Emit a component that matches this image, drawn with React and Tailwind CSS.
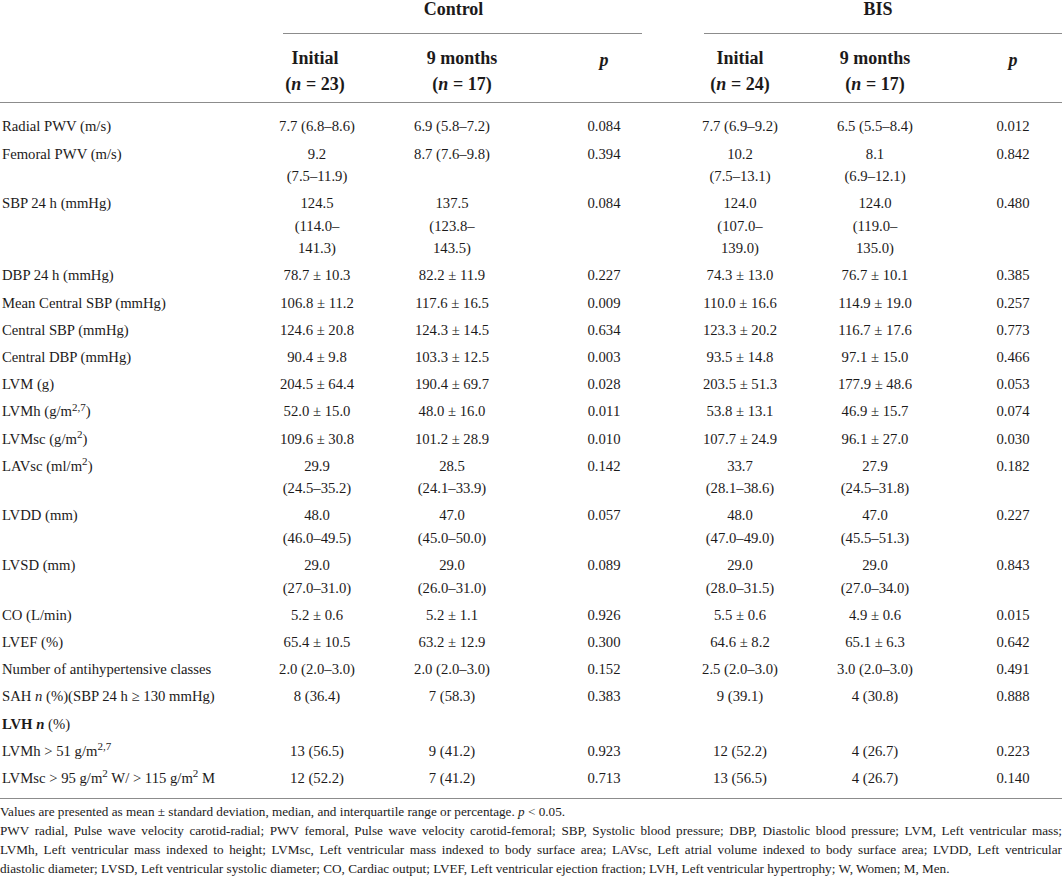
import React from 'react';

const cols = 'grid grid-cols-[250px_134px_136px_168px_104px_172px_98px]';

// values: control initial, control 9 months, p, BIS initial, BIS 9 months, p
const rows = [
    { label: 'Radial PWV (m/s)', v: ['7.7 (6.8–8.6)', '6.9 (5.8–7.2)', '0.084', '7.7 (6.9–9.2)', '6.5 (5.5–8.4)', '0.012'] },
    { label: 'Femoral PWV (m/s)', v: ['9.2\n(7.5–11.9)', '8.7 (7.6–9.8)', '0.394', '10.2\n(7.5–13.1)', '8.1\n(6.9–12.1)', '0.842'] },
    { label: 'SBP 24 h (mmHg)', v: ['124.5\n(114.0–\n141.3)', '137.5\n(123.8–\n143.5)', '0.084', '124.0\n(107.0–\n139.0)', '124.0\n(119.0–\n135.0)', '0.480'] },
    { label: 'DBP 24 h (mmHg)', v: ['78.7 ± 10.3', '82.2 ± 11.9', '0.227', '74.3 ± 13.0', '76.7 ± 10.1', '0.385'] },
    { label: 'Mean Central SBP (mmHg)', v: ['106.8 ± 11.2', '117.6 ± 16.5', '0.009', '110.0 ± 16.6', '114.9 ± 19.0', '0.257'] },
    { label: 'Central SBP (mmHg)', v: ['124.6 ± 20.8', '124.3 ± 14.5', '0.634', '123.3 ± 20.2', '116.7 ± 17.6', '0.773'] },
    { label: 'Central DBP (mmHg)', v: ['90.4 ± 9.8', '103.3 ± 12.5', '0.003', '93.5 ± 14.8', '97.1 ± 15.0', '0.466'] },
    { label: 'LVM (g)', v: ['204.5 ± 64.4', '190.4 ± 69.7', '0.028', '203.5 ± 51.3', '177.9 ± 48.6', '0.053'] },
    { label: <>LVMh (g/m<sup>2,7</sup>)</>, v: ['52.0 ± 15.0', '48.0 ± 16.0', '0.011', '53.8 ± 13.1', '46.9 ± 15.7', '0.074'] },
    { label: <>LVMsc (g/m<sup>2</sup>)</>, v: ['109.6 ± 30.8', '101.2 ± 28.9', '0.010', '107.7 ± 24.9', '96.1 ± 27.0', '0.030'] },
    { label: <>LAVsc (ml/m<sup>2</sup>)</>, v: ['29.9\n(24.5–35.2)', '28.5\n(24.1–33.9)', '0.142', '33.7\n(28.1–38.6)', '27.9\n(24.5–31.8)', '0.182'] },
    { label: 'LVDD (mm)', v: ['48.0\n(46.0–49.5)', '47.0\n(45.0–50.0)', '0.057', '48.0\n(47.0–49.0)', '47.0\n(45.5–51.3)', '0.227'] },
    { label: 'LVSD (mm)', v: ['29.0\n(27.0–31.0)', '29.0\n(26.0–31.0)', '0.089', '29.0\n(28.0–31.5)', '29.0\n(27.0–34.0)', '0.843'] },
    { label: 'CO (L/min)', v: ['5.2 ± 0.6', '5.2 ± 1.1', '0.926', '5.5 ± 0.6', '4.9 ± 0.6', '0.015'] },
    { label: 'LVEF (%)', v: ['65.4 ± 10.5', '63.2 ± 12.9', '0.300', '64.6 ± 8.2', '65.1 ± 6.3', '0.642'] },
    { label: 'Number of antihypertensive classes', v: ['2.0 (2.0–3.0)', '2.0 (2.0–3.0)', '0.152', '2.5 (2.0–3.0)', '3.0 (2.0–3.0)', '0.491'] },
    { label: <>SAH <i>n</i> (%)(SBP 24 h ≥ 130 mmHg)</>, v: ['8 (36.4)', '7 (58.3)', '0.383', '9 (39.1)', '4 (30.8)', '0.888'] },
    { label: <><b>LVH <i>n</i></b> (%)</>, v: ['', '', '', '', '', ''] },
    { label: <>LVMh &gt; 51 g/m<sup>2,7</sup></>, v: ['13 (56.5)', '9 (41.2)', '0.923', '12 (52.2)', '4 (26.7)', '0.223'] },
    { label: <>LVMsc &gt; 95 g/m<sup>2</sup> W/ &gt; 115 g/m<sup>2</sup> M</>, v: ['12 (52.2)', '7 (41.2)', '0.713', '13 (56.5)', '4 (26.7)', '0.140'] },
];

const App = () => {
    return (
        <div className="w-[1062px] h-[883px] bg-white text-[#1c1a1a] font-['Liberation_Serif',serif] overflow-hidden">
            {/* group headers */}
            <div className="flex h-[34px] text-[18px] font-bold leading-[18px]">
                <div className="w-[283px]" />
                <div className="w-[359px] border-b border-[#8c8c8c] text-center pr-[18px]">Control</div>
                <div className="w-[62px]" />
                <div className="flex-1 border-b border-[#8c8c8c] text-center pr-[10px]">BIS</div>
            </div>

            {/* column headers */}
            <div className={`${cols} h-[69px] border-b border-[#8c8c8c] text-[18px] font-bold leading-[26px] pt-[11px]`}>
                <div />
                <div className="text-center pr-[4px]">Initial<br />(<i>n</i> = 23)</div>
                <div className="text-center pl-[20px]">9 months<br />(<i>n</i> = 17)</div>
                <div className="text-center pt-[2px]"><i>p</i></div>
                <div className="text-center">Initial<br />(<i>n</i> = 24)</div>
                <div className="text-center pr-[6px]">9 months<br />(<i>n</i> = 17)</div>
                <div className="text-center pt-[2px]"><i>p</i></div>
            </div>

            {/* body */}
            <div className="pt-[10px] pb-[6px] border-b border-[#8c8c8c] text-[14.7px] leading-[22.5px]">
                {rows.map((r, i) => (
                    <div key={i} className={`${cols} py-[2.35px]`}>
                        <div className="pl-[2px] whitespace-nowrap">{r.label}</div>
                        <div className="text-center whitespace-pre-line">{r.v[0]}</div>
                        <div className="text-center whitespace-pre-line">{r.v[1]}</div>
                        <div className="text-center">{r.v[2]}</div>
                        <div className="text-center whitespace-pre-line">{r.v[3]}</div>
                        <div className="text-center whitespace-pre-line pr-[6px]">{r.v[4]}</div>
                        <div className="text-center">{r.v[5]}</div>
                    </div>
                ))}
            </div>

            {/* footnote */}
            <div className="pt-[3px] text-[13.2px] leading-[19px]">
                <p>Values are presented as mean ± standard deviation, median, and interquartile range or percentage. <i>p</i> &lt; 0.05.</p>
                <p className="[text-align-last:justify]">PWV radial, Pulse wave velocity carotid-radial; PWV femoral, Pulse wave velocity carotid-femoral; SBP, Systolic blood pressure; DBP, Diastolic blood pressure; LVM, Left ventricular mass;</p>
                <p className="[text-align-last:justify]">LVMh, Left ventricular mass indexed to height; LVMsc, Left ventricular mass indexed to body surface area; LAVsc, Left atrial volume indexed to body surface area; LVDD, Left ventricular</p>
                <p>diastolic diameter; LVSD, Left ventricular systolic diameter; CO, Cardiac output; LVEF, Left ventricular ejection fraction; LVH, Left ventricular hypertrophy; W, Women; M, Men.</p>
            </div>
        </div>
    );
};

export default App;
